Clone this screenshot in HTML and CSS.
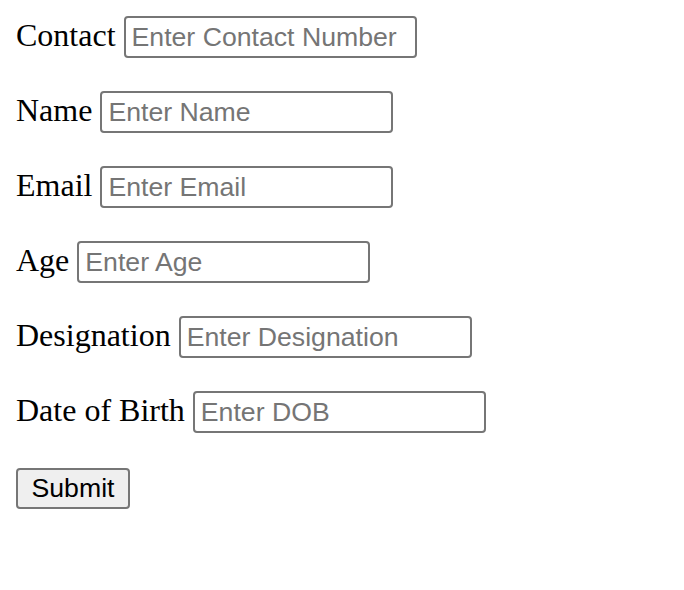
FILE: index.html
```html
<!DOCTYPE html>
<html>
<head>
<meta charset="utf-8">
<link rel="stylesheet" href="styles.css">
</head>
<body>
<form class="form">
  <div class="row"><label class="label">Contact</label><input class="field" type="text" placeholder="Enter Contact Number"></div>
  <div class="row"><label class="label">Name</label><input class="field" type="text" placeholder="Enter Name"></div>
  <div class="row"><label class="label">Email</label><input class="field" type="text" placeholder="Enter Email"></div>
  <div class="row"><label class="label">Age</label><input class="field" type="text" placeholder="Enter Age"></div>
  <div class="row"><label class="label">Designation</label><input class="field" type="text" placeholder="Enter Designation"></div>
  <div class="row"><label class="label">Date of Birth</label><input class="field" type="text" placeholder="Enter DOB"></div>
  <div class="row row-submit"><button class="submit" type="button">Submit</button></div>
</form>
</body>
</html>
```
FILE: styles.css
```css
html, body {
  background: #ffffff;
}
body {
  margin: 16px;
  font-family: "Liberation Serif", "Times New Roman", serif;
  font-size: 32px;
  color: #000000;
}
.form {
  display: flex;
  flex-direction: column;
  gap: 33px;
}
.row {
  display: flex;
  align-items: center;
  gap: 8px;
  height: 42px;
}
.row-submit {
  padding-top: 1px;
}
.label {
  line-height: 38px;
  margin-bottom: 4px;
  white-space: nowrap;
}
.field {
  box-sizing: border-box;
  width: 293px;
  height: 42px;
  margin: 0;
  padding: 0 6px;
  border: 2px solid #767676;
  border-radius: 4px;
  font-family: "Liberation Sans", Arial, sans-serif;
  font-size: 26.67px;
  color: #000;
  background: #fff;
  outline: none;
}
.field::placeholder {
  color: #757575;
  opacity: 1;
}
.submit {
  box-sizing: border-box;
  width: 114px;
  height: 41px;
  margin: 0;
  padding: 0 12px;
  border: 2px solid #767676;
  border-radius: 4px;
  background: #efefef;
  font-family: "Liberation Sans", Arial, sans-serif;
  font-size: 26.67px;
  color: #000;
  line-height: 1;
}
```
